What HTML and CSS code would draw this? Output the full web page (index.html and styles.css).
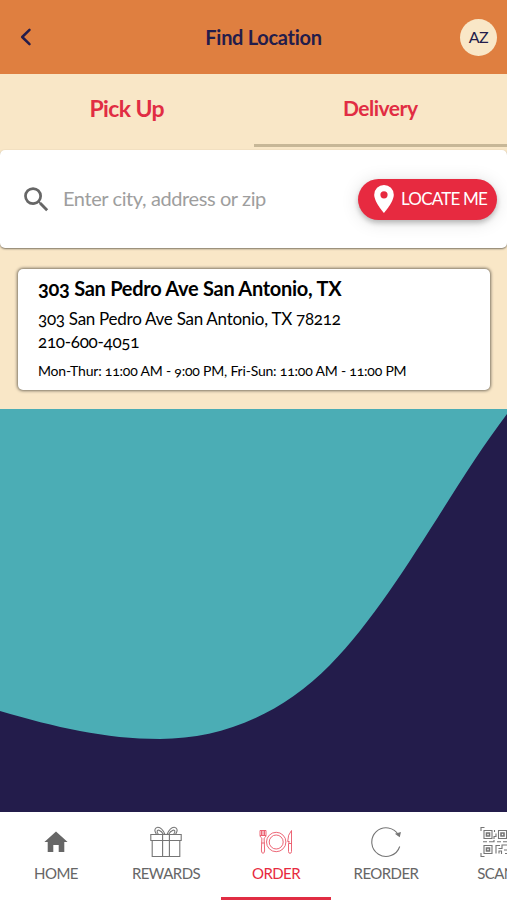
FILE: index.html
```html
<!DOCTYPE html>
<html lang="en">

<head>
    <meta charset="UTF-8">
    <meta name="viewport" content="width=device-width, initial-scale=1.0">
    <title>Find Location</title>
    <link rel="stylesheet" href="styles.css">
</head>

<body>
    <div class="app">
        <!-- Header -->
        <header class="header">
            <button class="back" aria-label="Back">
                <svg width="12" height="18" viewBox="0 0 12 18"><path d="M9.5 1.8 2.2 9l7.3 7.2" fill="none" stroke="#231c4b" stroke-width="2.5" stroke-linejoin="round" stroke-linecap="round"/></svg>
            </button>
            <h1>Find Location</h1>
            <div class="avatar">AZ</div>
        </header>

        <!-- Tabs -->
        <div class="tabs">
            <button class="tab pickup">Pick Up</button>
            <button class="tab delivery selected">Delivery</button>
        </div>

        <!-- Search -->
        <div class="search">
            <svg class="search-icon" width="33" height="33" viewBox="0 0 24 24"><path fill="#666" d="M15.5 14h-.79l-.28-.27A6.471 6.471 0 0 0 16 9.5 6.5 6.5 0 1 0 9.5 16c1.61 0 3.09-.59 4.23-1.57l.27.28v.79l5 4.99L20.49 19l-4.99-5zm-6 0C7.01 14 5 11.99 5 9.5S7.01 5 9.5 5 14 7.01 14 9.5 11.99 14 9.5 14z"/></svg>
            <input type="text" placeholder="Enter city, address or zip" aria-label="Location">
            <button class="locate">
                <svg width="20" height="28" viewBox="0 0 20 28"><path fill="#fff" fill-rule="evenodd" d="M10 0A9.8 9.8 0 0 0 .2 9.8C.2 17 10 28 10 28s9.8-11 9.8-18.2A9.8 9.8 0 0 0 10 0zm0 6.2a3.6 3.6 0 1 1 0 7.2 3.6 3.6 0 0 1 0-7.2z"/></svg>
                <span>LOCATE ME</span>
            </button>
        </div>

        <!-- Locations -->
        <main class="locations">
            <div class="card">
                <h2>303 San Pedro Ave San Antonio, TX</h2>
                <p class="address">303 San Pedro Ave San Antonio, TX 78212</p>
                <p class="phone">210-600-4051</p>
                <p class="hours">Mon-Thur: 11:00 AM - 9:00 PM, Fri-Sun: 11:00 AM - 11:00 PM</p>
            </div>
        </main>

        <div class="backdrop">
            <svg viewBox="0 0 507 403" preserveAspectRatio="none"><path fill="#4badb5" d="M0 0H507V5C450 80 395 190 330 256C282 305 222 330 160 330C105 330 55 318 0 302Z"/></svg>
        </div>

        <!-- Bottom navigation -->
        <nav class="nav">
            <a class="nav-item">
                <svg width="32" height="32" viewBox="0 0 32 32"><path fill="#666" d="M16 5.500 27.600 16H24.300V26H18.700V19H13.300V26H7.700V16H4.400Z"/></svg>
                <span>HOME</span>
            </a>
            <a class="nav-item">
                <svg width="32" height="32" viewBox="0 0 32 32" fill="none" stroke="#757575" stroke-width="1.1">
                    <path d="M.8 8.500H31.200V14.500H.8ZM2.200 14.500V30.500H29.800V14.500M12.600 8.500V30.500M19.400 8.500V30.500"/>
                    <path d="M15 8.500C13.500 5 10.500 1.200 7.800 1.300 4.900 1.500 4.300 4.400 5.400 6.300L6.500 8.500M8.500 8.500C5.900 5.300 7.400 3.700 9 4.300 11 5 12.500 6.700 13.500 8.500M17 8.500C18.500 5 21.500 1.200 24.200 1.300 27.100 1.500 27.700 4.400 26.600 6.300L25.500 8.500M23.500 8.500C26.100 5.300 24.600 3.700 23 4.300 21 5 19.500 6.700 18.500 8.500"/>
                </svg>
                <span>REWARDS</span>
            </a>
            <a class="nav-item active">
                <svg width="34" height="32" viewBox="0 0 34 32" fill="none" stroke="#ea5566" stroke-width=".9">
                    <circle cx="17.200" cy="16" r="9.700"/>
                    <circle cx="17.200" cy="16" r="7"/>
                    <path d="M1 4.500V9.500Q1 11.200 2.900 12.200L2.400 24Q2.300 27.300 4 27.300T5.600 24L5.100 12.200Q7 11.200 7 9.500V4.500M2.500 4.500V9.500M4 4.500V10M5.500 4.500V9.500M1 4.500H7M1 9.500H7M2.500 17H5.500"/>
                    <path d="M32.500 4.500V25.500Q32.500 27.300 31 27.300T29.500 25.500V17.500L30.300 15.500H28.700Q28.700 8.500 32.500 4.500ZM29.800 17.500H32.500"/>
                </svg>
                <span>ORDER</span>
            </a>
            <a class="nav-item">
                <svg width="32" height="32" viewBox="0 0 32 32" fill="none" stroke="#757575" stroke-width="1.1">
                    <path d="M29.700 20.500A14.300 14.300 0 1 1 28.600 9.200"/>
                    <path d="M26.200 8 29.400 10.300 30.200 6.800Z" fill="#757575"/>
                </svg>
                <span>REORDER</span>
            </a>
            <a class="nav-item scan">
                <svg width="32" height="32" viewBox="0 0 32 32" fill="none" stroke="#757575" stroke-width="1.1">
                    <path d="M1 5V1.500H4.500M28 1.500H31V5M1 27V30.500H4.500M28 30.500H31V27"/>
                    <path d="M4 4.500H12V12.500H4ZM18.500 4.500H26.500V12.500H18.500ZM4 19.500H12V27.500H4Z"/>
                    <path d="M6.500 7H9.500V10H6.500ZM21 7H24V10H21ZM6.500 22H9.500V25H6.500Z" stroke-width="1.6"/>
                    <path d="M14.500 4V6M16 7.500V10.500H14V13M3 15.700H7M9 15.700H14V14M17 15.700H21M23 15.700H29M16 27.500V19.500H20M18.500 22.500H22V19H27M24 24H29M19 27.500V25H21.500V28M25 27.500H29"/>
                </svg>
                <span>SCAN</span>
            </a>
        </nav>
    </div>
</body>

</html>
```
FILE: styles.css
```css
* {
    box-sizing: border-box;
}

body {
    margin: 0;
    font-family: Lato, "Open Sans", sans-serif;
    color: #000000;
}

h1,
h2,
p {
    margin: 0;
    white-space: nowrap;
}

button {
    border: none;
    padding: 0;
    background: none;
    font-family: inherit;
}

svg {
    display: block;
    flex-shrink: 0;
}

.app {
    display: flex;
    flex-direction: column;
    height: 900px;
    overflow: hidden;
    background-color: #f9e7c7;
}

/* Header */
.header {
    display: grid;
    grid-template-columns: 50px 1fr 50px;
    align-items: center;
    height: 74px;
    padding: 0 10px;
    background-color: #df7f40;
    color: #231c4b;
}

.back {
    padding-left: 10px;
}

.header h1 {
    padding-left: 20px;
    font-size: 20px;
    letter-spacing: -0.3px;
    text-align: center;
}

.avatar {
    justify-self: end;
    width: 37px;
    height: 37px;
    border-radius: 50%;
    background-color: #f9e7c7;
    font-size: 16px;
    line-height: 36px;
    text-align: center;
    letter-spacing: -0.6px;
}

/* Tabs */
.tabs {
    display: flex;
    height: 76px;
}

.tab {
    flex: 1;
    margin-bottom: 3px;
    padding-bottom: 3px;
    border-bottom: 3px solid transparent;
    color: #e12d43;
    font-weight: bold;
}

.tab.selected {
    border-bottom-color: #c7b797;
}

.pickup {
    padding-bottom: 2px;
    font-size: 23px;
    letter-spacing: -0.6px;
}

.delivery {
    font-size: 21px;
    letter-spacing: -0.5px;
}

/* Search */
.search {
    display: flex;
    flex-shrink: 0;
    align-items: center;
    height: 98px;
    padding: 0 10px 0 20px;
    border-radius: 5px;
    background-color: #ffffff;
    box-shadow: 0 1px 2px rgba(0, 0, 0, 0.5);
}

.search input {
    flex: 1;
    min-width: 0;
    padding: 0 0 3px 10px;
    border: none;
    outline: none;
    font-family: inherit;
    font-size: 20px;
    letter-spacing: -0.4px;
}

.search input::placeholder {
    color: #9e9e9e;
    opacity: 1;
}

.locate {
    display: flex;
    align-items: center;
    gap: 7px;
    width: 139px;
    height: 41px;
    padding-left: 16px;
    border-radius: 21px;
    background-color: #e72a40;
    box-shadow: 0 3px 5px rgba(0, 0, 0, 0.22), 0 2px 18px rgba(0, 0, 0, 0.13);
    color: #ffffff;
    font-size: 17px;
    letter-spacing: -0.8px;
    white-space: nowrap;
}

.locate span {
    padding-bottom: 2px;
}

/* Locations */
.locations {
    flex-shrink: 0;
    height: 161px;
    padding: 21px 17px 0 18px;
}

.card {
    height: 121px;
    padding: 6px 20px;
    border-radius: 5px;
    background-color: #ffffff;
    box-shadow: 0 0 3px 1px rgba(0, 0, 0, 0.5);
    font-variant-numeric: oldstyle-nums;
}

.card h2 {
    font-size: 20px;
    line-height: 26px;
    letter-spacing: -0.28px;
}

.address,
.phone {
    font-size: 17px;
    line-height: 23px;
    letter-spacing: -0.27px;
}

.address {
    padding-top: 6px;
}

.hours {
    padding-top: 8px;
    font-size: 14px;
    line-height: 20px;
    letter-spacing: -0.2px;
}

/* Curved backdrop */
.backdrop {
    flex: 1;
    min-height: 0;
    background-color: #231c4b;
}

.backdrop svg {
    width: 100%;
    height: 100%;
}

/* Bottom navigation */
.nav {
    display: flex;
    flex-shrink: 0;
    height: 88px;
    padding-left: 1px;
    overflow: hidden;
    background-color: #ffffff;
}

.nav-item {
    display: flex;
    flex: 0 0 110px;
    flex-direction: column;
    align-items: center;
    padding-top: 14px;
    border-bottom: 3px solid transparent;
    color: #666666;
    font-size: 15px;
    line-height: 20px;
    letter-spacing: -0.55px;
}

.nav-item span {
    margin-top: 5px;
}

.nav-item.active {
    border-bottom-color: #e12d43;
    color: #e72a40;
}
```
